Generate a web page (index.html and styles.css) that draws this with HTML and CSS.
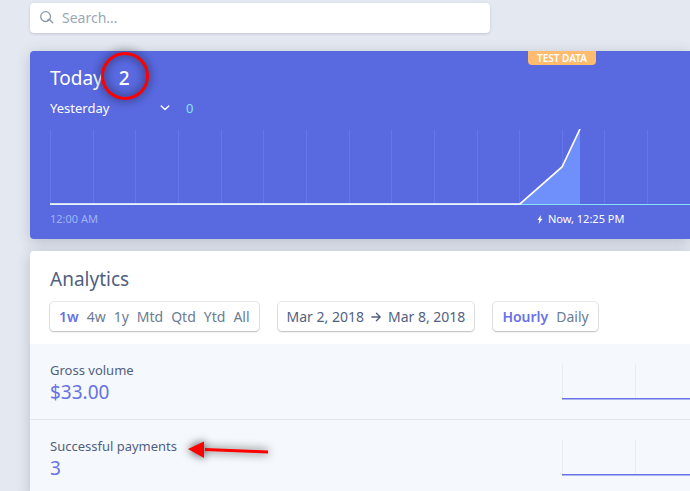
FILE: index.html
```html
<!DOCTYPE html>
<html lang="en">
<head>
  <meta charset="UTF-8">
  <meta name="viewport" content="width=device-width, initial-scale=1.0">
  <title>Dashboard</title>
  <link rel="stylesheet" href="styles.css">
</head>
<body>
  <label class="search">
    <svg width="14" height="14" viewBox="0 0 14 14" fill="none" stroke="#8898aa" stroke-width="1.3" stroke-linecap="round" aria-hidden="true">
      <circle cx="5.6" cy="5.6" r="4.9"/>
      <path d="M7.6 9.2L9.2 8.4L12.8 11.8"/>
    </svg>
    <input type="text" placeholder="Search…" aria-label="Search">
  </label>

  <section class="card today">
    <span class="badge">TEST DATA</span>
    <div class="today-row">
      <h1>Today</h1>
      <span class="today-count">2<svg class="circle" width="80" height="80" viewBox="0 0 80 80" fill="none" aria-hidden="true">
        <circle cx="41" cy="40" r="22.5" stroke="#ff0000" stroke-width="3"/>
      </svg></span>
    </div>
    <div class="compare">
      <span class="select">
        <select aria-label="Compare with">
          <option>Yesterday</option>
        </select>
        <svg width="10" height="6" viewBox="0 0 10 6" fill="none" stroke="#fff" stroke-width="1.4" stroke-linecap="round" stroke-linejoin="round" aria-hidden="true">
          <path d="M1.2 1L5 4.6L8.8 1"/>
        </svg>
      </span>
      <span class="compare-count">0</span>
    </div>
    <svg class="chart" height="77" aria-hidden="true">
      <path d="M.5 1V76M43.5 1V76M85.5 1V76M128.5 1V76M171.5 1V76M213.5 1V76M256.5 1V76M299.5 1V76M341.5 1V76M384.5 1V76M427.5 1V76M469.5 1V76M512.5 1V76M554.5 1V76M597.5 1V76M640.5 1V76" stroke="#6675ec"/>
      <path d="M470 76L512 37L530 0V76Z" fill="#6f8ffb"/>
      <line x1="0" y1="75.5" x2="100%" y2="75.5" stroke="#87e3f3"/>
      <path d="M0 75H470L512 38L530 0" fill="none" stroke="#fff" stroke-width="1.7"/>
    </svg>
    <div class="times">
      <span class="start">12:00 AM</span>
      <span class="now">
        <svg width="6" height="9" viewBox="0 0 6 9" fill="#fff" aria-hidden="true"><path d="M4 0L0.4 5H2.4L1.6 9L5.6 3.8H3.4Z"/></svg>
        Now, 12:25 PM
      </span>
    </div>
  </section>

  <section class="card analytics">
    <h2>Analytics</h2>
    <div class="filters">
      <div class="group">
        <button class="active">1w</button>
        <button>4w</button>
        <button>1y</button>
        <button>Mtd</button>
        <button>Qtd</button>
        <button>Ytd</button>
        <button>All</button>
      </div>
      <button class="group dates">
        <span>Mar 2, 2018</span>
        <svg width="10" height="10" viewBox="0 0 10 10" fill="none" stroke="#525f7f" stroke-width="1.3" stroke-linecap="round" stroke-linejoin="round" aria-hidden="true">
          <path d="M.8 5H9M5.4 1.2L9.2 5L5.4 8.8"/>
        </svg>
        <span>Mar 8, 2018</span>
      </button>
      <div class="group">
        <button class="active">Hourly</button>
        <button>Daily</button>
      </div>
    </div>

    <div class="stat">
      <div class="stat-text">
        <h3>Gross volume</h3>
        <p>$33.00</p>
      </div>
      <svg class="spark" height="36" aria-hidden="true">
        <path d="M.5 0V34M73.5 0V34" stroke="#e8edf2"/>
        <rect y="34" width="100%" height="1" fill="#6772e5"/>
        <rect y="35" width="100%" height="1" fill="#adb4f1"/>
      </svg>
    </div>
    <div class="stat">
      <div class="stat-text">
        <h3>Successful payments<svg class="arrow" width="110" height="50" viewBox="0 0 110 50" aria-hidden="true">
          <path d="M28 25.5L91 28" stroke="#ff0000" stroke-width="3"/>
          <path d="M11 25L27 17.5V34Z" fill="#ff0000"/>
        </svg></h3>
        <p>3</p>
      </div>
      <svg class="spark" height="36" aria-hidden="true">
        <path d="M.5 0V34M73.5 0V34" stroke="#e8edf2"/>
        <rect y="34" width="100%" height="1" fill="#6772e5"/>
        <rect y="35" width="100%" height="1" fill="#adb4f1"/>
      </svg>
    </div>
  </section>
</body>
</html>
```
FILE: styles.css
```css
* {
  box-sizing: border-box;
}

body {
  margin: 0;
  padding: 3px 0 0 30px;
  background-color: #e4e9f1;
  font-family: "Noto Sans", "Open Sans", sans-serif;
  font-size: 13px;
  line-height: 20px;
  color: #525f7f;
  overflow-x: hidden;
}

h1, h2, h3, p {
  margin: 0;
  font-weight: 400;
}

button, input, select {
  font: inherit;
  color: inherit;
  border: 0;
  padding: 0;
  margin: 0;
  background: none;
}

button {
  cursor: pointer;
}

.search {
  display: flex;
  align-items: center;
  gap: 8px;
  width: 70%;
  max-width: 460px;
  height: 30px;
  padding: 0 10px;
  background-color: #fff;
  border-radius: 4px;
  box-shadow: 0 1px 3px rgba(50, 50, 93, 0.2);
  font-size: 14px;
}

.search input {
  flex: 1;
  outline: none;
}

.search input::placeholder {
  color: #9aa7b8;
  opacity: 1;
}

.card {
  position: relative;
  border-radius: 4px 0 0 4px;
  box-shadow: 0 3px 14px rgba(50, 50, 73, 0.24);
}

.today {
  margin-top: 18px;
  padding: 14px 0 10px 20px;
  background-color: #5969e0;
  color: #fff;
}

.badge {
  position: absolute;
  top: 0;
  left: 498px;
  padding: 0 9px;
  border-radius: 0 0 4px 4px;
  background-color: #ffbb6e;
  font-size: 10px;
  font-weight: 600;
  line-height: 14px;
}

.today-row {
  display: flex;
  gap: 16px;
  font-size: 19px;
  line-height: 26px;
}

.today h1 {
  font-size: 19px;
}

.today-count {
  position: relative;
  font-weight: 500;
}

.circle {
  position: absolute;
  top: 50%;
  left: 50%;
  transform: translate(-50%, -50%);
  margin-top: -2px;
  filter: drop-shadow(0 0 5px rgba(0, 0, 0, 0.8));
}

.compare {
  display: flex;
  gap: 16px;
  margin-top: 7px;
}

.select {
  display: flex;
  align-items: center;
  width: 120px;
}

.select select {
  flex: 1;
  margin-right: -10px;
  appearance: none;
}

.select svg {
  pointer-events: none;
}

.compare-count {
  color: #87e3f3;
}

.chart {
  display: block;
  width: 100%;
  margin-top: 11px;
}

.times {
  display: flex;
  margin-top: 3px;
  font-size: 11px;
}

.start {
  flex: 0 0 487px;
  color: #9fb4f5;
}

.now {
  display: flex;
  align-items: center;
  gap: 5px;
  white-space: nowrap;
}

.analytics {
  margin-top: 12px;
  background-color: #fff;
}

.analytics h2 {
  padding: 15px 20px 0;
  font-size: 19px;
  line-height: 26px;
}

.filters {
  display: flex;
  gap: 19px;
  padding: 10px 20px 13px;
  font-size: 14px;
}

.group {
  display: flex;
  align-items: center;
  gap: 8px;
  height: 29px;
  padding: 0 9px;
  border-radius: 4px;
  background-color: #fff;
  box-shadow: 0 0 0 1px rgba(50, 50, 93, 0.1), 0 1px 2px rgba(0, 0, 0, 0.2);
  color: #6b7c93;
  white-space: nowrap;
}

.group .active {
  color: #6772e5;
  font-weight: 600;
}

.dates {
  gap: 7px;
  color: #525f7f;
}

.stat {
  display: flex;
  height: 76px;
  padding: 16px 0 0 20px;
  background-color: #f5f8fc;
  border-bottom: 1px solid #e2e8ee;
}

.stat-text {
  flex: 0 0 512px;
}

.stat h3 {
  position: relative;
  display: table;
  font-size: 13px;
}

.stat p {
  font-size: 19px;
  line-height: 24px;
  color: #6772e5;
}

.spark {
  flex: 1;
  min-width: 0;
  margin-top: 4px;
}

.arrow {
  position: absolute;
  top: -12px;
  left: 100%;
  filter: drop-shadow(0 0 5px rgba(0, 0, 0, 0.8));
}
```
